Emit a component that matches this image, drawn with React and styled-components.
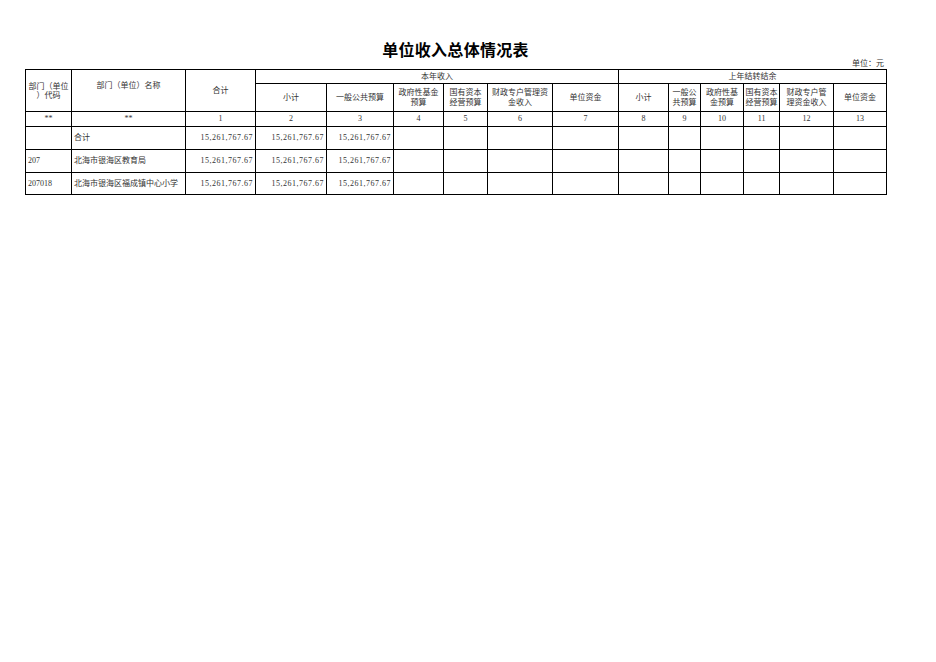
import React from "react";
import styled, {createGlobalStyle} from "styled-components";

const GlobalStyle = createGlobalStyle`
  html, body {
    margin: 0;
    padding: 0;
    background: #fff;
  }
  body {
    font-family: "Liberation Serif", "Noto Sans CJK SC", serif;
    color: #1a1a1a;
  }
`;

const Page = styled.div`
  width: 861px;
  padding: 0 0 0 25px;
`;

const Title = styled.h1`
  margin: 39px 0 0;
  font-family: "Noto Sans CJK SC", sans-serif;
  font-size: 16px;
  font-weight: 700;
  line-height: 20px;
  letter-spacing: 0.3px;
  text-align: center;
  color: #000;
`;

const UnitNote = styled.div`
  font-size: 8px;
  line-height: 10px;
  height: 10px;
  text-align: right;
  padding-right: 2px;
  color: #333;
`;

const Sheet = styled.table`
  width: 861px;
  table-layout: fixed;
  border-collapse: collapse;
  font-size: 8px;
`;

const Row = styled.tr`
  height: ${p => p.$h}px;
`;

const HeadCell = styled.th`
  border: 1px solid #000;
  padding: ${p => (p.$top ? "11px 1px 0" : "0 1px")};
  font-weight: 400;
  line-height: ${p => p.$lh || 10}px;
  text-align: center;
  vertical-align: ${p => (p.$top ? "top" : "middle")};
  color: #333;
  overflow: hidden;
`;

const Cell = styled.td`
  border: 1px solid #000;
  padding: 0 2px;
  line-height: 10px;
  text-align: ${p => p.$align || "left"};
  vertical-align: middle;
  white-space: nowrap;
  color: #333;
  letter-spacing: ${p => (p.$num ? "0.5px" : "0")};
  overflow: hidden;
`;

// widths measured off the sheet, left to right
const colWidths = [46, 114, 70, 71, 67, 50, 44, 65, 66, 50, 32, 43, 36, 54, 53];

const thisYear = [
  ["小计"],
  ["一般公共预算"],
  ["政府性基金", "预算"],
  ["国有资本", "经营预算"],
  ["财政专户管理资", "金收入"],
  ["单位资金"],
];

const lastYear = [
  ["小计"],
  ["一般公", "共预算"],
  ["政府性基", "金预算"],
  ["国有资本", "经营预算"],
  ["财政专户管", "理资金收入"],
  ["单位资金"],
];

const total = "15,261,767.67";

const rows = [
  {code: "", name: "合计", values: [total, total, total]},
  {code: "207", name: "北海市银海区教育局", values: [total, total, total]},
  {code: "207018", name: "北海市银海区福成镇中心小学", values: [total, total, total]},
];

const Lines = ({lines}) =>
  lines.map((l, i) => (
    <React.Fragment key={i}>
      {i > 0 && <br/>}
      {l}
    </React.Fragment>
  ));

export default function App() {
  return (
    <Page>
      <GlobalStyle/>
      <Title>单位收入总体情况表</Title>
      <UnitNote>单位：元</UnitNote>
      <Sheet>
        <colgroup>
          {colWidths.map((w, i) => <col key={i} style={{width: w}}/>)}
        </colgroup>
        <thead>
          <Row $h={14}>
            <HeadCell rowSpan={2} $lh={9}><Lines lines={["部门（单位", "）代码"]}/></HeadCell>
            <HeadCell rowSpan={2} $top>部门（单位）名称</HeadCell>
            <HeadCell rowSpan={2}>合计</HeadCell>
            <HeadCell colSpan={6}>本年收入</HeadCell>
            <HeadCell colSpan={6}>上年结转结余</HeadCell>
          </Row>
          <Row $h={28}>
            {thisYear.concat(lastYear).map((h, i) => (
              <HeadCell key={i}><Lines lines={h}/></HeadCell>
            ))}
          </Row>
          <Row $h={15}>
            <HeadCell>**</HeadCell>
            <HeadCell>**</HeadCell>
            {Array.from({length: 13}, (_, i) => <HeadCell key={i}>{i + 1}</HeadCell>)}
          </Row>
        </thead>
        <tbody>
          {rows.map((r, i) => (
            <Row key={i} $h={i === 2 ? 22 : 23}>
              <Cell>{r.code}</Cell>
              <Cell>{r.name}</Cell>
              {r.values.map((v, j) => <Cell key={j} $align="right" $num>{v}</Cell>)}
              {Array.from({length: 10}, (_, j) => <Cell key={"e" + j}/>)}
            </Row>
          ))}
        </tbody>
      </Sheet>
    </Page>
  );
}
